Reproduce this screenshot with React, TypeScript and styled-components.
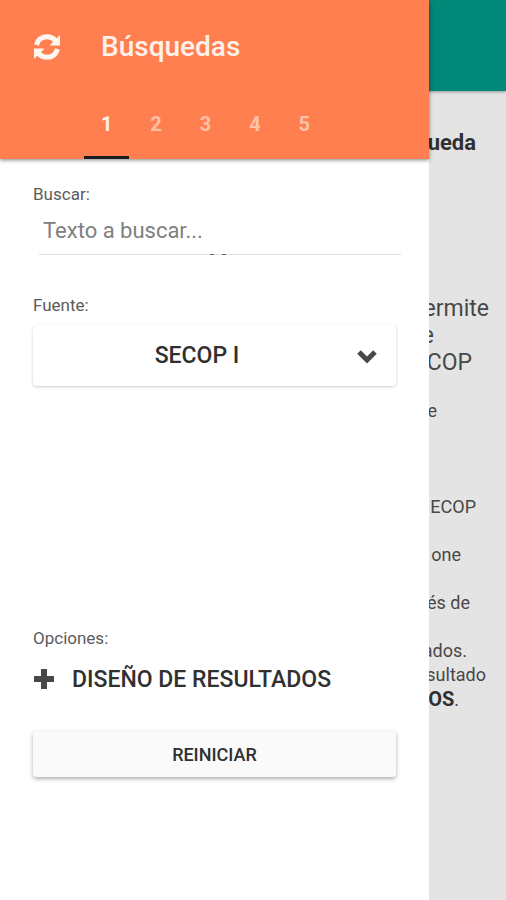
import React, { useState } from "react";
import styled, { createGlobalStyle } from "styled-components";

const GlobalStyle = createGlobalStyle`
  *, *::before, *::after { box-sizing: border-box; }
  html, body { margin: 0; }
  body { font-family: Roboto, "Liberation Sans", sans-serif; color: #303030; background: #e4e4e4; }
  button, input, select { font: inherit; color: inherit; margin: 0; }
`;

const Shell = styled.div`
  position: relative;
  min-height: 100vh;
  overflow: hidden;
`;

const PageBar = styled.header`
  height: 91px;
  background: #008878;
  box-shadow: 0 1px 3px rgba(0, 0, 0, 0.35);
`;

const PageText = styled.main`
  display: flex;
  flex-direction: column;
  align-items: flex-end;
  padding-top: 38px;
`;

const PageTitle = styled.h1<{ $tail: number }>`
  margin: 0 0 138px;
  padding-right: ${(p) => p.$tail}px;
  font-size: 22px;
  line-height: 28px;
  font-weight: 700;
`;

const Lead = styled.p<{ $tail: number }>`
  margin: 0;
  padding-right: ${(p) => p.$tail}px;
  font-size: 23px;
  line-height: 27px;
  color: #484848;
`;

const Line = styled.p<{ $tail: number; $before?: number }>`
  margin: ${(p) => p.$before ?? 0}px 0 0;
  padding-right: ${(p) => p.$tail}px;
  font-size: 18px;
  line-height: 24px;
  color: #484848;

  b {
    font-size: 20px;
    color: #303030;
  }
`;

const Drawer = styled.aside`
  position: absolute;
  inset: 0 77px 0 0;
  background: #fff;
`;

const DrawerHead = styled.header`
  display: flex;
  flex-direction: column;
  justify-content: space-between;
  height: 159px;
  background: #ff7f50;
  color: #fff1ea;
  box-shadow: 0 1px 4px rgba(0, 0, 0, 0.5);
`;

const TitleRow = styled.div`
  display: flex;
  align-items: center;
  gap: 40px;
  padding: 29px 33px 0;
`;

const IconButton = styled.button`
  display: flex;
  padding: 0;
  border: 0;
  background: none;
  color: #fff6f0;
`;

const Title = styled.h2`
  margin: 0;
  font-size: 28px;
  line-height: 36px;
  font-weight: 500;
`;

const Tabs = styled.div`
  display: grid;
  grid-template-columns: repeat(5, 1fr);
  gap: 4px;
  width: 243px;
  margin-left: 84px;
`;

const Tab = styled.button<{ $active: boolean }>`
  height: 60px;
  padding: 0 0 8px;
  border: 0;
  border-bottom: 3px solid ${(p) => (p.$active ? "#1c1c1c" : "transparent")};
  background: none;
  font-size: 20px;
  font-weight: 700;
  color: ${(p) => (p.$active ? "#fff1ea" : "#ffc1a8")};
`;

const Form = styled.form`
  display: flex;
  flex-direction: column;
  padding: 23px 33px;
`;

const Label = styled.label`
  font-size: 17px;
  line-height: 24px;
  color: #5c5c5c;
`;

const SourceLabel = styled(Label)`
  margin-top: 38px;
`;

const SearchBox = styled.div`
  margin: 0 -5px 0 6px;
`;

const SearchInput = styled.input`
  display: block;
  width: 100%;
  height: 48px;
  padding: 0 4px;
  border: 0;
  outline: 0;
  background: none;
  font-size: 22px;

  &::placeholder { color: #808080; opacity: 1; }
`;

const Underline = styled.div`
  display: flex;
  gap: 8px;
  height: 1px;
  padding-left: 171px;
  background: #dedede;
`;

const Tick = styled.i`
  width: 4px;
  background: #666;
`;

const SourceField = styled.div`
  display: grid;
  align-items: center;
  margin-top: 8px;
  border-radius: 4px;
  background: #fff;
  box-shadow: 0 1px 3px rgba(0, 0, 0, 0.2);

  > * { grid-area: 1 / 1; }
  > svg { justify-self: end; margin-right: 18px; pointer-events: none; }
`;

const SourceSelect = styled.select`
  width: 100%;
  height: 61px;
  padding: 0 35px 0 0;
  border: 0;
  appearance: none;
  background: none;
  font-size: 23px;
  font-weight: 500;
  text-align: center;
  text-align-last: center;
`;

const Options = styled.section`
  display: flex;
  flex-direction: column;
  margin-top: 240px;
`;

const Caption = styled.h3`
  margin: 0;
  font-size: 17px;
  line-height: 24px;
  font-weight: 400;
  color: #5c5c5c;
`;

const DesignButton = styled.button`
  display: flex;
  align-items: center;
  gap: 18px;
  height: 58px;
  padding: 0 1px;
  border: 0;
  background: none;
  font-size: 23px;
  font-weight: 500;
  white-space: nowrap;
`;

const ResetButton = styled.button`
  height: 46px;
  margin-top: 23px;
  border: 0;
  border-radius: 4px;
  background: #fafafa;
  box-shadow: 0 2px 4px rgba(0, 0, 0, 0.32);
  font-size: 18px;
  font-weight: 500;
`;

const RefreshIcon = () => (
  <svg width="28" height="28" viewBox="0 0 28 28" aria-hidden="true">
    <g fill="none" stroke="currentColor" strokeWidth="5">
      <path d="M3.500 12C5 6.500 9 3.800 14 3.800c3.500 0 6.200 1.200 8.500 3.700" />
      <path d="M24.500 16C23 21.500 19 24.200 14 24.200c-3.500 0-6.200-1.200-8.500-3.700" />
    </g>
    <path fill="currentColor" d="M27 2v10.500H16.500zM1 26V15.500h10.500z" />
  </svg>
);

const ChevronIcon = () => (
  <svg width="22" height="16" viewBox="0 0 22 16" fill="none" stroke="#484848" strokeWidth="5" aria-hidden="true">
    <path d="M3 4l8 8 8-8" />
  </svg>
);

const PlusIcon = () => (
  <svg width="20" height="20" viewBox="0 0 20 20" stroke="#484848" strokeWidth="6" aria-hidden="true">
    <path d="M10 0v20M0 10h20" />
  </svg>
);

export default function App() {
  const [tab, setTab] = useState(1);
  return (
    <>
      <GlobalStyle />
      <Shell>
        <PageBar />
        <PageText>
          <PageTitle $tail={30}>ueda</PageTitle>
          <Lead $tail={17}>ermite</Lead>
          <Lead $tail={72}>e</Lead>
          <Lead $tail={34}>COP</Lead>
          <Line $tail={69} $before={23}>e</Line>
          <Line $tail={30} $before={72}>ECOP</Line>
          <Line $tail={45} $before={24}>one</Line>
          <Line $tail={36} $before={24}>és de</Line>
          <Line $tail={39} $before={24}>ados.</Line>
          <Line $tail={20}>sultado</Line>
          <Line $tail={47}><b>OS</b>.</Line>
        </PageText>
        <Drawer>
          <DrawerHead>
            <TitleRow>
              <IconButton type="button" aria-label="Actualizar"><RefreshIcon /></IconButton>
              <Title>Búsquedas</Title>
            </TitleRow>
            <Tabs role="tablist">
              {[1, 2, 3, 4, 5].map((n) => (
                <Tab key={n} type="button" role="tab" aria-selected={n === tab} $active={n === tab} onClick={() => setTab(n)}>
                  {n}
                </Tab>
              ))}
            </Tabs>
          </DrawerHead>
          <Form onSubmit={(e) => e.preventDefault()}>
            <Label htmlFor="search">Buscar:</Label>
            <SearchBox>
              <SearchInput id="search" type="text" placeholder="Texto a buscar..." />
              <Underline><Tick /><Tick /></Underline>
            </SearchBox>
            <SourceLabel htmlFor="source">Fuente:</SourceLabel>
            <SourceField>
              <SourceSelect id="source" defaultValue="SECOP I">
                <option>SECOP I</option>
              </SourceSelect>
              <ChevronIcon />
            </SourceField>
            <Options>
              <Caption>Opciones:</Caption>
              <DesignButton type="button"><PlusIcon />DISEÑO DE RESULTADOS</DesignButton>
              <ResetButton type="reset">REINICIAR</ResetButton>
            </Options>
          </Form>
        </Drawer>
      </Shell>
    </>
  );
}
